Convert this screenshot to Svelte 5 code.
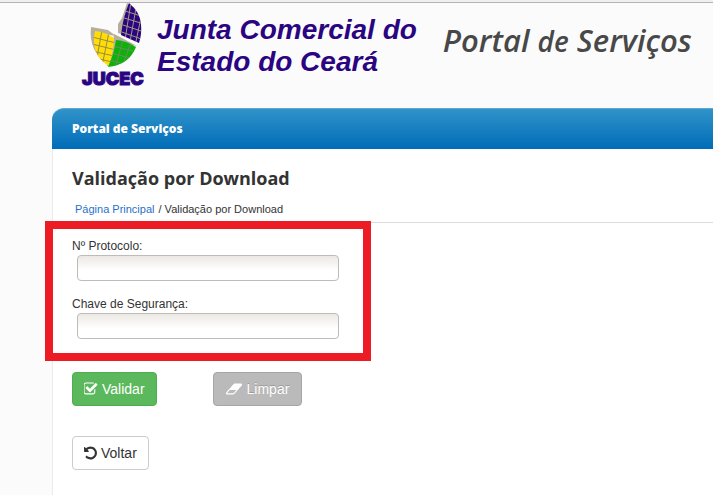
<script>
	let protocolo = '';
	let chave = '';

	function limpar() {
		protocolo = '';
		chave = '';
	}
</script>

<svelte:head>
	<title>Portal de Serviços</title>
</svelte:head>

<header class="top">
	<div class="brand">
		<div class="logo">
			<svg width="54" height="68" viewBox="90 2 54 68" aria-hidden="true">
				<defs>
					<clipPath id="leaf-blue"><path d="M129 3Q140 12 141 24Q142 34 139 43L121 35Q123 17 129 3Z" /></clipPath>
					<clipPath id="leaf-yellow"><path d="M95 31Q105 32 114 38Q114 50 109 66Q90 55 95 31Z" /></clipPath>
					<clipPath id="leaf-green"><path d="M116 40Q127 41 136 47Q129 65 108 67Q114 54 116 40Z" /></clipPath>
					<filter id="soft" x="-20%" y="-20%" width="140%" height="140%">
						<feGaussianBlur stdDeviation="0.6" />
					</filter>
				</defs>
				<g fill="#b5ae9c" filter="url(#soft)">
					<path d="M127 3L131 5L124 35L118 33L118 24L122 18Z" />
					<path d="M91 27L108 30L116 36L96 33L96 48L109 66Q88 51 91 27Z" />
					<path d="M114 34L120 37L137 46L118 42L111 66L107 66L112 52Z" />
				</g>
				<g clip-path="url(#leaf-blue)">
					<rect x="118" y="2" width="26" height="44" fill="#2b0581" />
					<path d="M131 2L125 40M136 8L130 42M142 13L135 46M122 10L144 17M121 17L144 24M120 24L144 32M119 31L144 40" fill="none" stroke="#a39a83" />
				</g>
				<g clip-path="url(#leaf-yellow)">
					<rect x="90" y="28" width="28" height="40" fill="#ffdd05" />
					<path d="M102 30L97 58M109 32L102 66M92 37L116 43M92 44L116 50M92 51L114 56M95 58L112 62" fill="none" stroke="#978b4a" />
				</g>
				<g clip-path="url(#leaf-green)">
					<rect x="106" y="38" width="32" height="30" fill="#0cb10c" />
					<path d="M123 40L115 68M131 42L122 68M113 46L136 52M111 53L134 59M109 60L128 65" fill="none" stroke="#6c8d59" />
				</g>
			</svg>
			<span class="logo-name">JUCEC</span>
		</div>
		<p class="org">Junta Comercial do<br />Estado do Ceará</p>
	</div>
	<p class="portal">Portal <small>de</small> Serviços</p>
</header>

<main>
	<div class="bar">Portal de Serviços</div>
	<div class="content">
		<h1>Validação por Download</h1>
		<nav>
			<a href="#principal">Página Principal</a>
			<span>/ Validação por Download</span>
		</nav>

		<form on:submit|preventDefault>
			<div class="fields">
				<label for="protocolo">Nº Protocolo:</label>
				<input id="protocolo" type="text" bind:value={protocolo} />
				<label for="chave">Chave de Segurança:</label>
				<input id="chave" type="text" bind:value={chave} />
			</div>

			<div class="actions">
				<button type="submit" class="btn btn-validar">
					<svg width="14" height="14" viewBox="128 64 1664 1664" aria-hidden="true"><path d="M1472 930v318q0 119-84.500 203.500t-203.500 84.500h-832q-119 0-203.500-84.500t-84.500-203.500v-832q0-119 84.500-203.500t203.500-84.500h832q63 0 117 25 15 7 18 23 3 17-9 29l-49 49q-10 10-23 10-3 0-9-2-23-6-45-6h-832q-66 0-113 47t-47 113v832q0 66 47 113t113 47h832q66 0 113-47t47-113v-254q0-13 9-22l64-64q10-10 23-10 6 0 12 3 20 8 20 29zm231-489l-814 814q-24 24-57 24t-57-24l-430-430q-24-24-24-57t24-57l110-110q24-24 57-24t57 24l263 263 647-647q24-24 57-24t57 24l110 110q24 24 24 57t-24 57z" /></svg>
					Validar
				</button>
				<button type="button" class="btn btn-limpar" on:click={limpar}>
					<svg width="17" height="14" viewBox="0 64 1920 1664" aria-hidden="true"><path d="M832 1408l336-384h-768l-336 384h768zm1013-1077q15 34 9.500 71.500t-30.500 65.500l-896 1024q-38 44-96 44h-768q-38 0-69.500-20.500t-47.500-54.500q-15-34-9.500-71.500t30.500-65.500l896-1024q38-44 96-44h768q38 0 69.500 20.500t47.500 54.500z" /></svg>
					Limpar
				</button>
			</div>
		</form>

		<button type="button" class="btn btn-voltar">
			<svg width="13" height="14" viewBox="128 64 1536 1664" aria-hidden="true"><path d="M1664 896q0 156-61 298t-164 245-245 164-298 61q-172 0-327-72.500t-264-204.500q-7-10-6.500-22.500t8.500-20.500l137-138q10-9 25-9 16 2 23 12 73 95 179 147t225 52q104 0 198.500-40.500t163.500-109.500 109.500-163.500 40.500-198.500-40.500-198.500-109.500-163.500-163.500-109.500-198.500-40.500q-98 0-188 35.500t-160 101.500l137 138q31 30 14 69-17 40-59 40h-448q-26 0-45-19t-19-45v-448q0-42 40-59 39-17 69 14l130 129q107-101 244.500-156.500t284.500-55.500q156 0 298 61t245 164 164 245 61 298z" /></svg>
			Voltar
		</button>
	</div>
</main>

<style>
	:global(body) {
		background: #fbfbfb;
		font-family: 'Liberation Sans', Arial, sans-serif;
		font-size: 12px;
		color: #333;
		overflow-x: hidden;
	}

	.top {
		display: flex;
		align-items: flex-start;
		gap: 26px;
		padding: 0 0 20px 82px;
		border-top: 2px solid #f0f0f0;
		box-shadow: inset 0 1px #b5b5b5;
		white-space: nowrap;
	}

	.brand {
		display: flex;
		gap: 5px;
	}

	.logo {
		display: flex;
		flex-direction: column;
		width: 70px;
		height: 86px;
	}

	.logo svg {
		margin-left: 8px;
	}

	.logo-name {
		font-family: Inter, sans-serif;
		font-size: 18px;
		font-weight: 900;
		line-height: 18px;
		color: #2b0581;
		-webkit-text-stroke: 1px #2b0581;
	}

	.org {
		margin: 12px 0 0;
		font-size: 28px;
		font-weight: bold;
		font-style: italic;
		line-height: 32px;
		color: #2b0581;
	}

	.portal {
		margin: 18px 0 0;
		font-family: 'Open Sans', sans-serif;
		font-size: 31px;
		font-weight: 600;
		font-style: italic;
		line-height: 40px;
		color: #484848;
	}

	.portal small {
		font-size: 28px;
	}

	main {
		margin-left: 52px;
	}

	.bar {
		padding: 0 20px;
		border-top: 1px solid #5ba9d2;
		border-radius: 12px 0 0 0;
		background: linear-gradient(#3093c9, #006cb8);
		font-family: 'Open Sans', sans-serif;
		font-size: 12px;
		font-weight: 800;
		line-height: 40px;
		color: #fff;
	}

	.content {
		padding: 16px 0 26px 19px;
		border-left: 1px solid #ebebeb;
		background: #fff;
	}

	h1 {
		margin: 0;
		font-family: 'Open Sans', sans-serif;
		font-size: 18px;
		font-weight: bold;
		line-height: 26px;
	}

	nav {
		display: flex;
		gap: 4px;
		padding: 10px 3px 5px;
		border-bottom: 1px solid #ddd;
		font-size: 11px;
		line-height: 16px;
	}

	nav a {
		color: #2a6fc9;
		text-decoration: none;
	}

	.fields {
		display: flex;
		flex-direction: column;
		box-sizing: border-box;
		width: 326px;
		margin: -2px 0 0 -27px;
		padding: 9px 24px 14px 19px;
		border: 8px solid #ed1c24;
	}

	.fields label {
		line-height: 16px;
	}

	.fields input {
		box-sizing: border-box;
		height: 26px;
		margin: 1px 0 15px 5px;
		padding: 2px 6px;
		border: 1px solid #bfbbb7;
		border-radius: 4px;
		background: linear-gradient(#ece8e4, #fff 60%);
		font: inherit;
	}

	.fields input:last-child {
		margin-bottom: 0;
	}

	.actions {
		display: flex;
		gap: 56px;
		margin: 11px 0 30px;
	}

	.btn {
		display: flex;
		align-items: center;
		gap: 4px;
		padding: 6px 11px;
		border: 1px solid #ccc;
		border-radius: 4px;
		font-family: inherit;
		font-size: 14px;
		line-height: 20px;
		color: #333;
		background: #fff;
		cursor: pointer;
	}

	.btn svg {
		fill: currentColor;
	}

	.btn-validar {
		border-color: #4cae4c;
		background: #5cb85c;
		color: #fff;
	}

	.btn-limpar {
		padding: 6px 12px;
		border-color: #a6a6a6;
		background: #bababa;
		color: #fff;
		text-shadow: 0 -1px #999;
	}
</style>
